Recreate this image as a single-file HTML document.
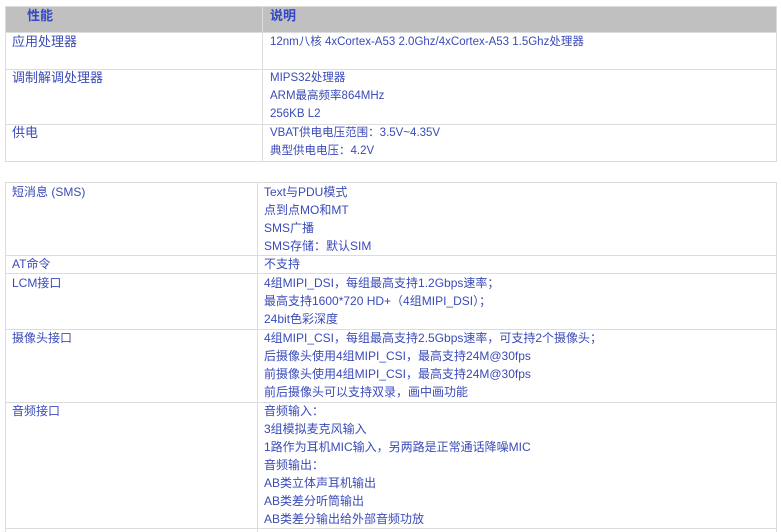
<!DOCTYPE html>
<html><head><meta charset="utf-8"><style>
body{margin:0;width:781px;height:532px;background:#fff;position:relative;overflow:hidden;font-family:"Liberation Sans","Noto Sans CJK SC",sans-serif;font-size:12px;color:#3a4bb8;}
.l{position:absolute;background:#dcdcdc;}
.t{position:absolute;line-height:18px;white-space:nowrap;}
</style></head><body>
<div style="position:absolute;left:5px;top:7px;width:772px;height:25px;background:#c0c0c0"></div>
<div class="l" style="left:5px;top:6px;width:772px;height:1px"></div>
<div class="l" style="left:5px;top:32px;width:772px;height:1px"></div>
<div class="l" style="left:5px;top:69px;width:772px;height:1px"></div>
<div class="l" style="left:5px;top:124px;width:772px;height:1px"></div>
<div class="l" style="left:5px;top:161px;width:772px;height:1px"></div>
<div class="l" style="left:5px;top:6px;width:1px;height:156px"></div>
<div class="l" style="left:262px;top:6px;width:1px;height:156px"></div>
<div class="l" style="left:776px;top:6px;width:1px;height:156px"></div>
<div class="t" style="left:27px;top:7px;font-weight:bold;font-size:13px;color:#3348c8">性能</div>
<div class="t" style="left:270px;top:7px;font-weight:bold;font-size:13px;color:#3348c8">说明</div>
<div class="t" style="left:12px;top:33px;font-size:13px">应用处理器</div>
<div class="t" style="left:270px;top:33px;font-size:11.5px">12nm八核 4xCortex-A53 2.0Ghz/4xCortex-A53 1.5Ghz处理器</div>
<div class="t" style="left:12px;top:69px;font-size:13px">调制解调处理器</div>
<div class="t" style="left:270px;top:69px;font-size:11.5px">MIPS32处理器<br>ARM最高频率864MHz<br>256KB L2</div>
<div class="t" style="left:12px;top:124px;font-size:13px">供电</div>
<div class="t" style="left:270px;top:124px;font-size:11.5px">VBAT供电电压范围：3.5V~4.35V<br>典型供电电压：4.2V</div>
<div class="l" style="left:5px;top:182px;width:772px;height:1px"></div>
<div class="l" style="left:5px;top:255px;width:772px;height:1px"></div>
<div class="l" style="left:5px;top:273px;width:772px;height:1px"></div>
<div class="l" style="left:5px;top:329px;width:772px;height:1px"></div>
<div class="l" style="left:5px;top:402px;width:772px;height:1px"></div>
<div class="l" style="left:5px;top:528px;width:772px;height:1px"></div>
<div class="l" style="left:5px;top:182px;width:1px;height:350px"></div>
<div class="l" style="left:257px;top:182px;width:1px;height:350px"></div>
<div class="l" style="left:776px;top:182px;width:1px;height:350px"></div>
<div class="t" style="left:12px;top:183px">短消息 (SMS)</div>
<div class="t" style="left:264px;top:183px">Text与PDU模式<br>点到点MO和MT<br>SMS广播<br>SMS存储：默认SIM</div>
<div class="t" style="left:12px;top:255px">AT命令</div>
<div class="t" style="left:264px;top:255px">不支持</div>
<div class="t" style="left:12px;top:274px">LCM接口</div>
<div class="t" style="left:264px;top:274px">4组MIPI_DSI，每组最高支持1.2Gbps速率；<br>最高支持1600*720 HD+（4组MIPI_DSI）；<br>24bit色彩深度</div>
<div class="t" style="left:12px;top:329px">摄像头接口</div>
<div class="t" style="left:264px;top:329px">4组MIPI_CSI，每组最高支持2.5Gbps速率，可支持2个摄像头；<br>后摄像头使用4组MIPI_CSI，最高支持24M@30fps<br>前摄像头使用4组MIPI_CSI，最高支持24M@30fps<br>前后摄像头可以支持双录，画中画功能</div>
<div class="t" style="left:12px;top:402px">音频接口</div>
<div class="t" style="left:264px;top:402px">音频输入：<br>3组模拟麦克风输入<br>1路作为耳机MIC输入，另两路是正常通话降噪MIC<br>音频输出：<br>AB类立体声耳机输出<br>AB类差分听筒输出<br>AB类差分输出给外部音频功放</div>
</body></html>
